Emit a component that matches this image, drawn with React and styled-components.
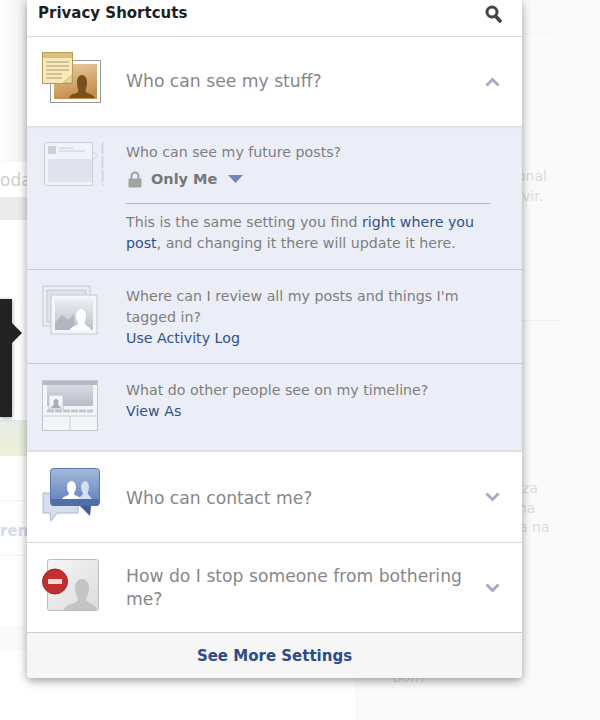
import React from 'react';
import styled, { createGlobalStyle } from 'styled-components';

const Global = createGlobalStyle`
  html, body { margin: 0; padding: 0; background: #fff; }
  body { font-family: "DejaVu Sans", "Liberation Sans", sans-serif; }
`;

const Page = styled.div`
  position: relative;
  width: 600px;
  height: 720px;
  overflow: hidden;
  background: #fff;
`;

/* faded page behind the popup */
const Backdrop = styled.div`
  position: absolute;
  inset: 0;
`;
const BackStrip = styled.div`
  position: absolute;
  left: ${p => p.$x}px;
  top: ${p => p.$y}px;
  width: ${p => p.$w}px;
  height: ${p => p.$h}px;
  background: ${p => p.$bg};
`;
const GhostText = styled.div`
  position: absolute;
  left: ${p => p.$x}px;
  top: ${p => p.$y}px;
  font-size: ${p => p.$size || 14}px;
  line-height: 20px;
  color: ${p => p.$color || '#dcdcdc'};
  font-weight: ${p => p.$bold ? 700 : 400};
  white-space: nowrap;
`;
const Tip = styled.div`
  position: absolute;
  left: 0;
  top: 299px;
  width: 12px;
  height: 118px;
  background: #232323;
  box-shadow: 0 1px 4px rgba(0,0,0,.4);
  &::after {
    content: "";
    position: absolute;
    left: 12px;
    top: 24px;
    border-left: 10px solid #232323;
    border-top: 10px solid transparent;
    border-bottom: 10px solid transparent;
  }
`;

const Panel = styled.div`
  position: relative;
  margin-left: 27px;
  width: 495px;
  height: 678px;
  display: flex;
  flex-direction: column;
  background: #fff;
  border-radius: 0 0 4px 4px;
  box-shadow: 0 3px 10px rgba(0,0,0,.38);
`;

const Header = styled.div`
  height: 24px;
  flex: none;
  display: flex;
  align-items: center;
  justify-content: space-between;
  padding: 0 20px 12px 11px;
  border-bottom: 1px solid #d9d9d9;
  svg { margin-top: 4px; }
`;
const Title = styled.div`
  font-size: 15px;
  font-weight: 700;
  color: #1f1f1f;
  line-height: 24px;
  padding-top: 1px;
`;

const Row = styled.div`
  flex: none;
  height: ${p => p.$h}px;
  display: flex;
  align-items: center;
  box-sizing: border-box;
  border-bottom: ${p => p.$line ? '1px solid #d4d6d9' : 'none'};
  padding-right: 22px;
`;
const IconCell = styled.div`
  flex: none;
  width: 99px;
  padding-left: ${p => p.$left || 15}px;
  box-sizing: border-box;
  display: flex;
  margin-bottom: ${p => p.$lift || 0}px;
`;
const SubIconCell = styled.div`
  flex: none;
  width: 99px;
  padding-left: ${p => p.$left || 15}px;
  box-sizing: border-box;
  margin-top: ${p => p.$top || 0}px;
  svg { display: block; }
`;
const RowLabel = styled.div`
  flex: 1;
  font-size: 17.2px;
  line-height: 23px;
  color: #878787;
  padding-top: ${p => p.$drop || 0}px;
`;
const Chevron = styled.svg`
  flex: none;
  width: 15px;
  height: 10px;
  display: block;
`;

const Expanded = styled.div`
  flex: none;
  height: 326px;
  background: #ebeef7;
  display: flex;
  flex-direction: column;
  box-shadow: inset 0 3px 3px -2px rgba(0,0,0,.1), inset 0 -3px 3px -2px rgba(0,0,0,.1);
`;
const SubRow = styled.div`
  flex: none;
  height: ${p => p.$h}px;
  display: flex;
  box-sizing: border-box;
  border-bottom: ${p => p.$line ? '1px solid #c6cad3' : 'none'};
  padding-top: ${p => p.$pad}px;
`;
const SubBody = styled.div`
  width: 364px;
  font-size: 14.2px;
  line-height: 21px;
  color: #7e7e7e;
`;
const SubLink = styled.a`
  color: #33508c;
  text-decoration: none;
`;
const Audience = styled.div`
  display: flex;
  align-items: center;
  height: 24px;
  margin-top: 4px;
  margin-left: 2px;
`;
const AudienceName = styled.span`
  font-size: 14.5px;
  font-weight: 700;
  color: #777;
  margin: 0 11px 0 9px;
`;
const Divider = styled.div`
  height: 1px;
  background: #b3b7c1;
  margin: 12px 0 8px;
`;

const Footer = styled.div`
  flex: 1;
  display: flex;
  align-items: center;
  justify-content: center;
  background: #f6f6f6;
  border-top: 1px solid #cfcfcf;
  border-radius: 0 0 4px 4px;
  font-size: 15px;
  font-weight: 700;
  color: #2f4b88;
`;

const ChevronIcon = ({ up }) => (
  <Chevron viewBox="0 0 15 10">
    <path d={up ? 'M1.5 8.5 7.5 2.5 13.5 8.5' : 'M1.5 1.5 7.5 7.5 13.5 1.5'} fill="none" stroke="#a5adc6" strokeWidth="3" />
  </Chevron>
);

const SearchIcon = () => (
  <svg width="17" height="18" viewBox="0 0 17 18">
    <circle cx="7" cy="7" r="5" fill="none" stroke="#444" strokeWidth="3" />
    <path d="M10.5 11 15 16" stroke="#444" strokeWidth="3.6" strokeLinecap="round" />
  </svg>
);

const LockIcon = () => (
  <svg width="14" height="17" viewBox="0 0 14 17">
    <path d="M3.5 8V5a3.5 3.5 0 0 1 7 0v3" fill="none" stroke="#a2a2a2" strokeWidth="2" />
    <rect x="0.5" y="7.5" width="13" height="9" rx="1" fill="#a2a2a2" />
  </svg>
);

const Caret = () => (
  <svg width="15" height="8" viewBox="0 0 15 8">
    <path d="M0 0H15L7.5 8Z" fill="#6f88b8" />
  </svg>
);

const StuffIcon = () => (
  <svg width="60" height="54" viewBox="0 0 60 54">
    <defs>
      <linearGradient id="brown" x1="0" y1="0" x2="0.3" y2="1">
        <stop offset="0" stopColor="#e9cfa6" />
        <stop offset="1" stopColor="#c58f4c" />
      </linearGradient>
    </defs>
    <rect x="8.5" y="9.5" width="50" height="42" fill="#fff" stroke="#999" />
    <rect x="12" y="13" width="43" height="35" fill="url(#brown)" />
    <path d="M27 47c1-4 7-4 9-6 1-2-1-5-1-10 0-4 2-7 5-7s5 3 5 7c0 5-2 8-1 10 2 2 7 2 9 6Z" fill="#7b4f1d" />
    <rect x="0.5" y="1.5" width="30" height="31" fill="#f7e9b8" stroke="#b79a5d" />
    <rect x="1" y="2" width="29" height="5" fill="#d9c07e" />
    <path d="M4 11H27M4 15H27M4 19H27M4 23H20M4 27H20" stroke="#a99a76" strokeWidth="1" />
    <path d="M21 32 30 24V32Z" fill="#e8d69c" stroke="#b79a5d" strokeWidth=".6" />
  </svg>
);

const PostIcon = () => (
  <svg width="62" height="46" viewBox="0 0 62 46">
    <rect x="1.5" y="1.5" width="48" height="43" rx="2" fill="#f1f3f9" stroke="#c8ccd7" />
    <path d="M49.5 10 54 14.5 49.5 19Z" fill="#f1f3f9" stroke="#c8ccd7" />
    <rect x="5" y="5" width="8" height="8" fill="#ccd0da" />
    <path d="M16 7H30M16 10H42" stroke="#c6cad4" />
    <rect x="5" y="18" width="44" height="23" fill="#e0e3eb" />
    <path d="M59.5 1V45" stroke="#d3d6de" strokeWidth="2" strokeDasharray="12 2" />
  </svg>
);

const ReviewIcon = () => (
  <svg width="56" height="50" viewBox="0 0 56 50">
    <defs>
      <linearGradient id="greyPhoto" x1="0" y1="0" x2="0" y2="1">
        <stop offset="0" stopColor="#eceef2" />
        <stop offset="1" stopColor="#bcc0c9" />
      </linearGradient>
    </defs>
    <rect x="1" y="1" width="47" height="40" fill="#eceef4" stroke="#c4c8d1" />
    <rect x="5" y="5" width="39" height="32" fill="#dfe2ea" stroke="#c4c8d1" />
    <rect x="9" y="10" width="46" height="39" fill="#f4f5f9" stroke="#c4c8d1" />
    <rect x="13" y="14" width="38" height="31" fill="url(#greyPhoto)" />
    <path d="M13 38 20 30 26 35 32 29V45H13Z" fill="#b2b6c0" />
    <path d="M28 45c1-4 7-4 8-6 0-2-2-4-2-8 0-4 2-7 5-7s5 3 5 7c0 4-2 6-1 8 1 2 5 3 6 6Z" fill="#fff" />
  </svg>
);

const TimelineIcon = () => (
  <svg width="56" height="51" viewBox="0 0 56 51">
    <defs>
      <linearGradient id="cover" x1="0" y1="0" x2="0" y2="1">
        <stop offset="0" stopColor="#d8dbe3" />
        <stop offset="1" stopColor="#b7bbc5" />
      </linearGradient>
    </defs>
    <rect x="0.5" y="0.5" width="55" height="50" fill="#f4f5f9" stroke="#c2c6cf" />
    <rect x="1" y="1" width="54" height="4" fill="#b5b9c3" />
    <rect x="5" y="5" width="46" height="21" fill="url(#cover)" />
    <rect x="7" y="15" width="14" height="14" fill="#f4f5f9" stroke="#c2c6cf" />
    <path d="M9 28c1-3 3-2 3-4-1-1-1-5 2-5s3 4 2 5c0 2 2 1 3 4Z" fill="#a9adb7" />
    <path d="M5 31H51" stroke="#c2c6cf" strokeWidth="3" strokeDasharray="7 1" />
    <path d="M1 36H55M28 36V50" stroke="#c8ccd5" />
  </svg>
);

const ContactIcon = () => (
  <svg width="58" height="54" viewBox="0 0 58 54">
    <defs>
      <linearGradient id="blueBubble" x1="0" y1="0" x2="0" y2="1">
        <stop offset="0" stopColor="#a6b9dc" />
        <stop offset="1" stopColor="#5b7db8" />
      </linearGradient>
    </defs>
    <path d="M1 25H36V45H15L9 53 8 45H1Z" fill="#d6deee" stroke="#aab8d2" />
    <rect x="8.5" y="0.5" width="49" height="37" rx="3" fill="url(#blueBubble)" stroke="#5a78ad" />
    <path d="M20 31c1-3 6-3 7-5 0-2-2-3-2-7 0-3 2-6 4.500-6s4.500 3 4.500 6c0 4-2 5-2 7 1 2 6 2 7 5Z" fill="#fff" />
    <path d="M36 31c1-2 4-3 5-5 0-2-2-3-2-7 0-3 2-6 4-6s4 3 4 6c0 4-2 5-1 7 1 2 3 3 4 5Z" fill="#d5def0" />
    <path d="M9 31H57V35a3 3 0 0 1-3 3H12a3 3 0 0 1-3-3Z" fill="#4f6fa8" />
    <path d="M38 38H49L48 48Z" fill="#3f5f98" />
  </svg>
);

const BlockIcon = () => (
  <svg width="58" height="52" viewBox="0 0 58 52">
    <defs>
      <linearGradient id="greyBox" x1="0" y1="0" x2="1" y2="1">
        <stop offset="0" stopColor="#f6f6f6" />
        <stop offset="1" stopColor="#dcdcdc" />
      </linearGradient>
    </defs>
    <rect x="5.500" y="0.500" width="51" height="51" rx="2" fill="url(#greyBox)" stroke="#bdbdbd" />
    <path d="M22 51c1-6 12-6 14-10 0-3-3-6-3-12 0-6 4-9 7-9s7 3 7 9c0 6-3 9-3 12 2 4 10 4 11 10Z" fill="#c4c4c4" />
    <circle cx="13" cy="22.500" r="12.500" fill="#c22f2f" />
    <circle cx="13" cy="22.500" r="12.500" fill="none" stroke="#a32222" />
    <rect x="6" y="20" width="14" height="5" fill="#f1d9d9" />
  </svg>
);

const App = () => {
  return (
    <Page>
      <Global />
      <Backdrop>
        <BackStrip $x={0} $y={0} $w={27} $h={162} $bg="linear-gradient(to right,#fdfdfd,#f1f1f1)" />
        <BackStrip $x={0} $y={197} $w={27} $h={23} $bg="#ebebeb" />
        <BackStrip $x={0} $y={420} $w={27} $h={36} $bg="linear-gradient(#e6ece6,#eef0d8)" />
        <BackStrip $x={0} $y={500} $w={27} $h={1} $bg="#f1f1f1" />
        <BackStrip $x={0} $y={555} $w={27} $h={1} $bg="#f1f1f1" />
        <BackStrip $x={0} $y={626} $w={27} $h={25} $bg="#fafafa" />
        <BackStrip $x={355} $y={0} $w={245} $h={720} $bg="#fafafa" />
        <BackStrip $x={522} $y={33} $w={34} $h={1} $bg="#f3f3f3" />
        <BackStrip $x={522} $y={320} $w={38} $h={1} $bg="#f1f1f1" />
        <GhostText $x={0} $y={170} $size={17} $color="#d0d0d0">oda</GhostText>
        <GhostText $x={0} $y={521} $size={15} $color="#d5dbea" $bold>ren</GhostText>
        <GhostText $x={517} $y={166}>onal</GhostText>
        <GhostText $x={522} $y={186}>vir.</GhostText>
        <GhostText $x={522} $y={478}>za</GhostText>
        <GhostText $x={518} $y={498}>na</GhostText>
        <GhostText $x={519} $y={517}>a na</GhostText>
        <GhostText $x={392} $y={667}>Bom</GhostText>
        <Tip />
      </Backdrop>
      <Panel>
        <Header>
          <Title>Privacy Shortcuts</Title>
          <SearchIcon />
        </Header>
        <Row $h={89}>
          <IconCell $lift={8}><StuffIcon /></IconCell>
          <RowLabel>Who can see my stuff?</RowLabel>
          <ChevronIcon up />
        </Row>
        <Expanded>
          <SubRow $h={144} $line $pad={16}>
            <SubIconCell $left={16} $top={-1}><PostIcon /></SubIconCell>
            <SubBody>
              Who can see my future posts?
              <Audience>
                <LockIcon />
                <AudienceName>Only Me</AudienceName>
                <Caret />
              </Audience>
              <Divider />
              This is the same setting you find <SubLink>right where you post</SubLink>, and changing it there will update it here.
            </SubBody>
          </SubRow>
          <SubRow $h={94} $line $pad={16}>
            <SubIconCell $top={-1}><ReviewIcon /></SubIconCell>
            <SubBody>
              Where can I review all my posts and things I'm tagged in?
              <br />
              <SubLink>Use Activity Log</SubLink>
            </SubBody>
          </SubRow>
          <SubRow $h={88} $pad={16}>
            <SubIconCell><TimelineIcon /></SubIconCell>
            <SubBody>
              What do other people see on my timeline?
              <br />
              <SubLink>View As</SubLink>
            </SubBody>
          </SubRow>
        </Expanded>
        <Row $h={91} $line>
          <IconCell $lift={5}><ContactIcon /></IconCell>
          <RowLabel $drop={2}>Who can contact me?</RowLabel>
          <ChevronIcon />
        </Row>
        <Row $h={89}>
          <IconCell $lift={5}><BlockIcon /></IconCell>
          <RowLabel $drop={1}>How do I stop someone from bothering me?</RowLabel>
          <ChevronIcon />
        </Row>
        <Footer>See More Settings</Footer>
      </Panel>
    </Page>
  );
};

export default App;
